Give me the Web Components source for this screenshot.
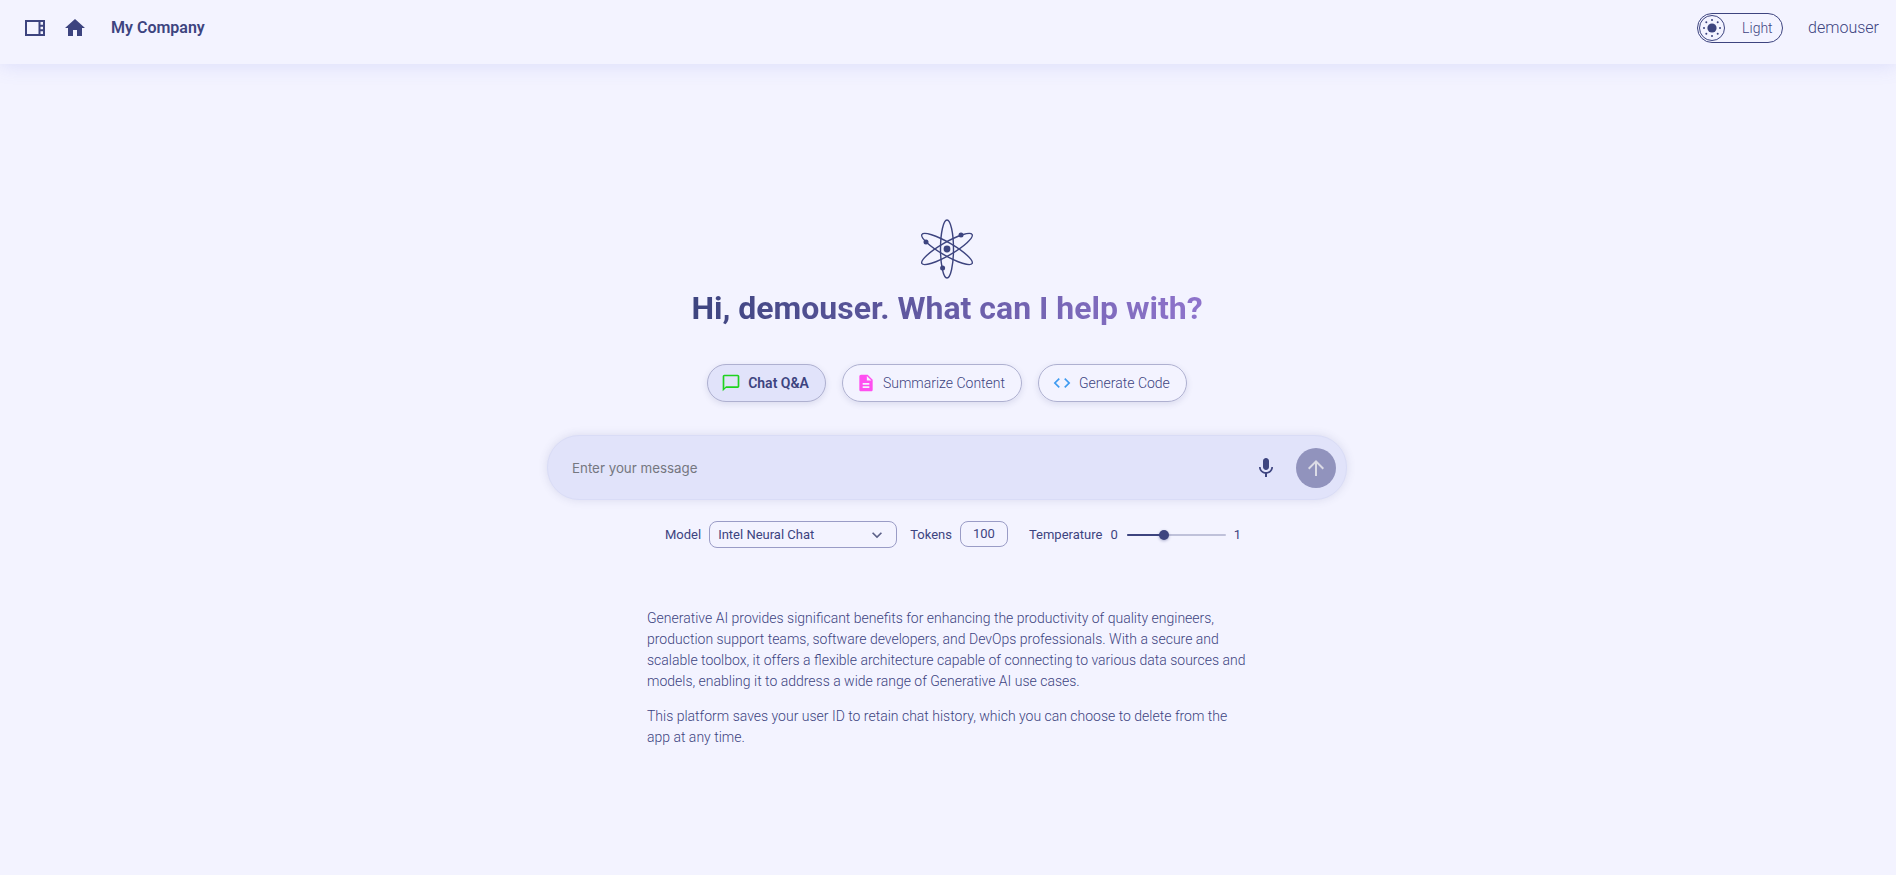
<!DOCTYPE html>
<html lang="en">
<head>
<meta charset="utf-8">
<title>My Company</title>
<style>
	html, body { margin: 0; height: 100%; }
	body {
		background: #f3f3ff;
		color: #3d447f;
		font-family: Roboto, "Liberation Sans", sans-serif;
		overflow: hidden;
	}
</style>
</head>
<body>
<app-header>My Company</app-header>
<app-main>
	<atom-logo></atom-logo>
	<hero-title>Hi, demouser. What can I help with?</hero-title>
	<chip-row>
		<prompt-chip active>
			<svg slot="icon" viewBox="0 0 24 24" fill="#1fd31f"><path d="M20 2H4c-1.1 0-2 .9-2 2v18l4-4h14c1.1 0 2-.9 2-2V4c0-1.1-.9-2-2-2zm0 14H6l-2 2V4h16v12z"/></svg>
			Chat Q&amp;A
		</prompt-chip>
		<prompt-chip>
			<svg slot="icon" viewBox="0 0 24 24" fill="#ff4ff0"><path d="M14 2H6c-1.1 0-1.99.9-1.99 2L4 20c0 1.1.89 2 1.99 2H18c1.1 0 2-.9 2-2V8l-6-6zm2 16H8v-2h8v2zm0-4H8v-2h8v2zm-3-5V3.5L18.5 9H13z"/></svg>
			Summarize Content
		</prompt-chip>
		<prompt-chip>
			<svg slot="icon" viewBox="0 0 24 24" fill="#3f9bf0"><path d="M9.4 16.6 4.8 12l4.6-4.6L8 6l-6 6 6 6 1.4-1.4zm5.2 0 4.6-4.6-4.6-4.6L16 6l6 6-6 6-1.4-1.4z"/></svg>
			Generate Code
		</prompt-chip>
	</chip-row>
	<message-box placeholder="Enter your message"></message-box>
	<model-controls></model-controls>
	<intro-text>
		<p>Generative AI provides significant benefits for enhancing the productivity of quality engineers, production support teams, software developers, and DevOps professionals. With a secure and scalable toolbox, it offers a flexible architecture capable of connecting to various data sources and models, enabling it to address a wide range of Generative AI use cases.</p>
		<p>This platform saves your user ID to retain chat history, which you can choose to delete from the app at any time.</p>
	</intro-text>
</app-main>
<script>
class AppHeader extends HTMLElement {
	connectedCallback() {
		const shadowRoot = this.attachShadow({ mode: "open" });
		shadowRoot.innerHTML = `
			<style>
				:host {
					display: flex;
					align-items: center;
					box-sizing: border-box;
					height: 64px;
					padding: 0 17px 8px 23px;
					background: #f3f3ff;
					box-shadow: 0 0 20px rgba(96, 104, 220, 0.18);
					position: relative;
				}
				svg { width: 24px; height: 24px; fill: #3d447f; display: block; }
				.icons { display: flex; gap: 16px; }
				.name { margin: 0 0 2px 24px; font-size: 16px; font-weight: 600; color: #3d447f; }
				.spacer { flex: 1; }
				.user { margin: 0 0 2px 25px; font-size: 16px; font-weight: 300; color: #3d447f; }
			</style>
			<div class="icons">
				<svg viewBox="0 0 24 24"><path d="M2,4v16h20V4H2z M20,8.67h-2.5V6H20V8.67z M20,10.67v2.67h-2.5v-2.67H20z M4,6h11.5v12H4V6z M17.5,18v-2.67H20V18H17.5z"/></svg>
				<svg viewBox="0 0 24 24"><path d="M10 20v-6h4v6h5v-8h3L12 3 2 12h3v8z"/></svg>
			</div>
			<span class="name"><slot></slot></span>
			<span class="spacer"></span>
			<theme-toggle></theme-toggle>
			<span class="user">demouser</span>
		`;
	}
}

class ThemeToggle extends HTMLElement {
	connectedCallback() {
		const shadowRoot = this.attachShadow({ mode: "open" });
		shadowRoot.innerHTML = `
			<style>
				:host {
					display: flex;
					align-items: center;
					box-sizing: border-box;
					width: 86px;
					height: 30px;
					border: 1px solid #3d447f;
					border-radius: 15px;
					position: relative;
				}
				.knob {
					position: absolute;
					left: 1px;
					top: 1px;
					box-sizing: border-box;
					width: 26px;
					height: 26px;
					border: 1px solid #3d447f;
					border-radius: 50%;
					display: flex;
					align-items: center;
					justify-content: center;
				}
				.knob svg { display: block; width: 22px; height: 22px; }
				.label { margin-left: 44px; font-size: 14px; font-weight: 300; }
			</style>
			<div class="knob">
				<svg viewBox="0 0 22 22" fill="#3d447f">
					<circle cx="11" cy="11" r="4.6"/>
					<circle cx="11" cy="3" r="1"/><circle cx="11" cy="19" r="1"/>
					<circle cx="3" cy="11" r="1"/><circle cx="19" cy="11" r="1"/>
					<circle cx="5.3" cy="5.3" r="1"/><circle cx="16.7" cy="5.3" r="1"/>
					<circle cx="5.3" cy="16.7" r="1"/><circle cx="16.7" cy="16.7" r="1"/>
				</svg>
			</div>
			<span class="label">Light</span>
		`;
	}
}

class AppMain extends HTMLElement {
	connectedCallback() {
		const shadowRoot = this.attachShadow({ mode: "open" });
		shadowRoot.innerHTML = `
			<style>
				:host {
					display: flex;
					flex-direction: column;
					align-items: center;
					padding-top: 155px;
				}
			</style>
			<slot></slot>
		`;
	}
}

class AtomLogo extends HTMLElement {
	connectedCallback() {
		const shadowRoot = this.attachShadow({ mode: "open" });
		shadowRoot.innerHTML = `
			<style>
				:host { display: block; width: 60px; height: 60px; margin-left: -2px; }
				svg { display: block; width: 60px; height: 60px; }
			</style>
			<svg viewBox="0 0 60 60" fill="none" stroke="#3d447f" stroke-width="1.4">
				<ellipse cx="30" cy="30" rx="6.5" ry="29"/>
				<ellipse cx="30" cy="30" rx="6.5" ry="29" transform="rotate(60 30 30)"/>
				<ellipse cx="30" cy="30" rx="6.5" ry="29" transform="rotate(-60 30 30)"/>
				<g fill="#3d447f" stroke="none">
					<circle cx="30" cy="30" r="3.4"/>
					<circle cx="9" cy="23" r="2.5"/>
					<circle cx="44" cy="16" r="2.5"/>
					<circle cx="25.6" cy="49" r="2.5"/>
				</g>
			</svg>
		`;
	}
}

class HeroTitle extends HTMLElement {
	connectedCallback() {
		const shadowRoot = this.attachShadow({ mode: "open" });
		shadowRoot.innerHTML = `
			<style>
				:host { display: block; margin-top: 10px; margin-left: -2px; }
				h1 {
					margin: 0;
					font-size: 32px;
					line-height: 38px;
					font-weight: 700;
					background: linear-gradient(90deg, #3d447f, #8f74cc);
					-webkit-background-clip: text;
					background-clip: text;
					color: transparent;
				}
			</style>
			<h1><slot></slot></h1>
		`;
	}
}

class ChipRow extends HTMLElement {
	connectedCallback() {
		const shadowRoot = this.attachShadow({ mode: "open" });
		shadowRoot.innerHTML = `
			<style>
				:host { display: flex; gap: 16px; margin-top: 37px; margin-left: -2px; }
			</style>
			<slot></slot>
		`;
	}
}

class PromptChip extends HTMLElement {
	connectedCallback() {
		const shadowRoot = this.attachShadow({ mode: "open" });
		shadowRoot.innerHTML = `
			<style>
				:host {
					display: flex;
					align-items: center;
					gap: 7px;
					box-sizing: border-box;
					height: 38px;
					padding: 0 16px 0 13px;
					border: 1px solid #aeb0d0;
					border-radius: 19px;
					font-size: 14px;
					font-weight: 300;
					color: #3d447f;
					box-shadow: 0 2px 6px rgba(61, 68, 127, 0.14);
				}
				:host([active]) { background: #e1e3fa; font-weight: 600; }
				::slotted(svg) { width: 20px; height: 20px; display: block; }
			</style>
			<slot name="icon"></slot>
			<slot></slot>
		`;
	}
}

class MessageBox extends HTMLElement {
	connectedCallback() {
		const shadowRoot = this.attachShadow({ mode: "open" });
		shadowRoot.innerHTML = `
			<style>
				:host {
					display: flex;
					align-items: center;
					box-sizing: border-box;
					width: 800px;
					height: 65px;
					margin-top: 33px;
					margin-left: -2px;
					padding: 0 10px 0 24px;
					background: #e1e3fa;
					border: 1px solid #d9dcf6;
					border-radius: 32px;
					box-shadow: 0 0 10px rgba(61, 68, 127, 0.14);
				}
				.placeholder {
					flex: 1;
					font-family: Inter, "Liberation Sans", sans-serif;
					font-size: 13.33px;
					color: #757780;
				}
				.mic { width: 24px; height: 24px; fill: #3d447f; display: block; margin-right: 18px; }
				.send {
					display: flex;
					align-items: center;
					justify-content: center;
					width: 40px;
					height: 40px;
					border-radius: 50%;
					background: #9193bd;
				}
				.send svg { width: 24px; height: 24px; fill: #dcdce6; display: block; }
			</style>
			<span class="placeholder"></span>
			<svg class="mic" viewBox="0 0 24 24"><path d="M12 14c1.66 0 2.99-1.34 2.99-3L15 5c0-1.66-1.34-3-3-3S9 3.34 9 5v6c0 1.66 1.34 3 3 3zm5.3-3c0 3-2.54 5.1-5.3 5.1S6.7 14 6.7 11H5c0 3.41 2.72 6.23 6 6.72V21h2v-3.28c3.28-.48 6-3.3 6-6.72h-1.7z"/></svg>
			<div class="send"><svg viewBox="0 0 24 24"><path d="M4 12l1.41 1.41L11 7.83V20h2V7.83l5.58 5.59L20 12l-8-8-8 8z"/></svg></div>
		`;
		shadowRoot.querySelector(".placeholder").textContent = this.getAttribute("placeholder");
	}
}

class ModelControls extends HTMLElement {
	connectedCallback() {
		const shadowRoot = this.attachShadow({ mode: "open" });
		shadowRoot.innerHTML = `
			<style>
				:host {
					display: flex;
					align-items: center;
					margin-top: 21px;
					margin-left: 10px;
					font-size: 13px;
					color: #3d447f;
				}
				.select {
					display: flex;
					align-items: center;
					justify-content: space-between;
					box-sizing: border-box;
					width: 188px;
					height: 27px;
					margin-left: 8px;
					padding: 0 9px 0 8px;
					border: 1px solid #9a9cc6;
					border-radius: 8px;
				}
				.select svg { width: 20px; height: 20px; fill: #5b6088; display: block; }
				.tokens-label { margin-left: 13px; }
				.tokens {
					display: flex;
					align-items: center;
					justify-content: center;
					box-sizing: border-box;
					width: 48px;
					height: 26px;
					margin-left: 8px;
					margin-bottom: 1px;
					padding-bottom: 2px;
					border: 1px solid #9a9cc6;
					border-radius: 8px;
				}
				.temp-label { margin-left: 21px; }
				.zero { margin-left: 8px; }
				.slider {
					position: relative;
					width: 99px;
					height: 2px;
					margin: 0 8px 0 9px;
					background: #bfc1da;
					border-radius: 1px;
				}
				.fill { width: 38px; height: 2px; background: #3d447f; border-radius: 1px; }
				.thumb {
					position: absolute;
					left: 32px;
					top: -4px;
					width: 10px;
					height: 10px;
					background: #3d447f;
					border-radius: 50%;
					box-shadow: 0 1px 3px rgba(61, 68, 127, 0.4);
				}
			</style>
			<span>Model</span>
			<div class="select">
				<span>Intel Neural Chat</span>
				<svg viewBox="0 0 24 24"><path d="M7.41 8.59 12 13.17l4.59-4.58L18 10l-6 6-6-6 1.41-1.41z"/></svg>
			</div>
			<span class="tokens-label">Tokens</span>
			<div class="tokens">100</div>
			<span class="temp-label">Temperature</span>
			<span class="zero">0</span>
			<div class="slider"><div class="fill"></div><div class="thumb"></div></div>
			<span>1</span>
		`;
	}
}

class IntroText extends HTMLElement {
	connectedCallback() {
		const shadowRoot = this.attachShadow({ mode: "open" });
		shadowRoot.innerHTML = `
			<style>
				:host {
					display: block;
					box-sizing: border-box;
					width: 602px;
					margin-top: 60px;
					font-size: 14px;
					line-height: 21px;
					font-weight: 300;
					color: #3d447f;
				}
				::slotted(p) { margin: 0 0 14px; }
			</style>
			<slot></slot>
		`;
	}
}

customElements.define("app-header", AppHeader);
customElements.define("theme-toggle", ThemeToggle);
customElements.define("app-main", AppMain);
customElements.define("atom-logo", AtomLogo);
customElements.define("hero-title", HeroTitle);
customElements.define("chip-row", ChipRow);
customElements.define("prompt-chip", PromptChip);
customElements.define("message-box", MessageBox);
customElements.define("model-controls", ModelControls);
customElements.define("intro-text", IntroText);
</script>
</body>
</html>
